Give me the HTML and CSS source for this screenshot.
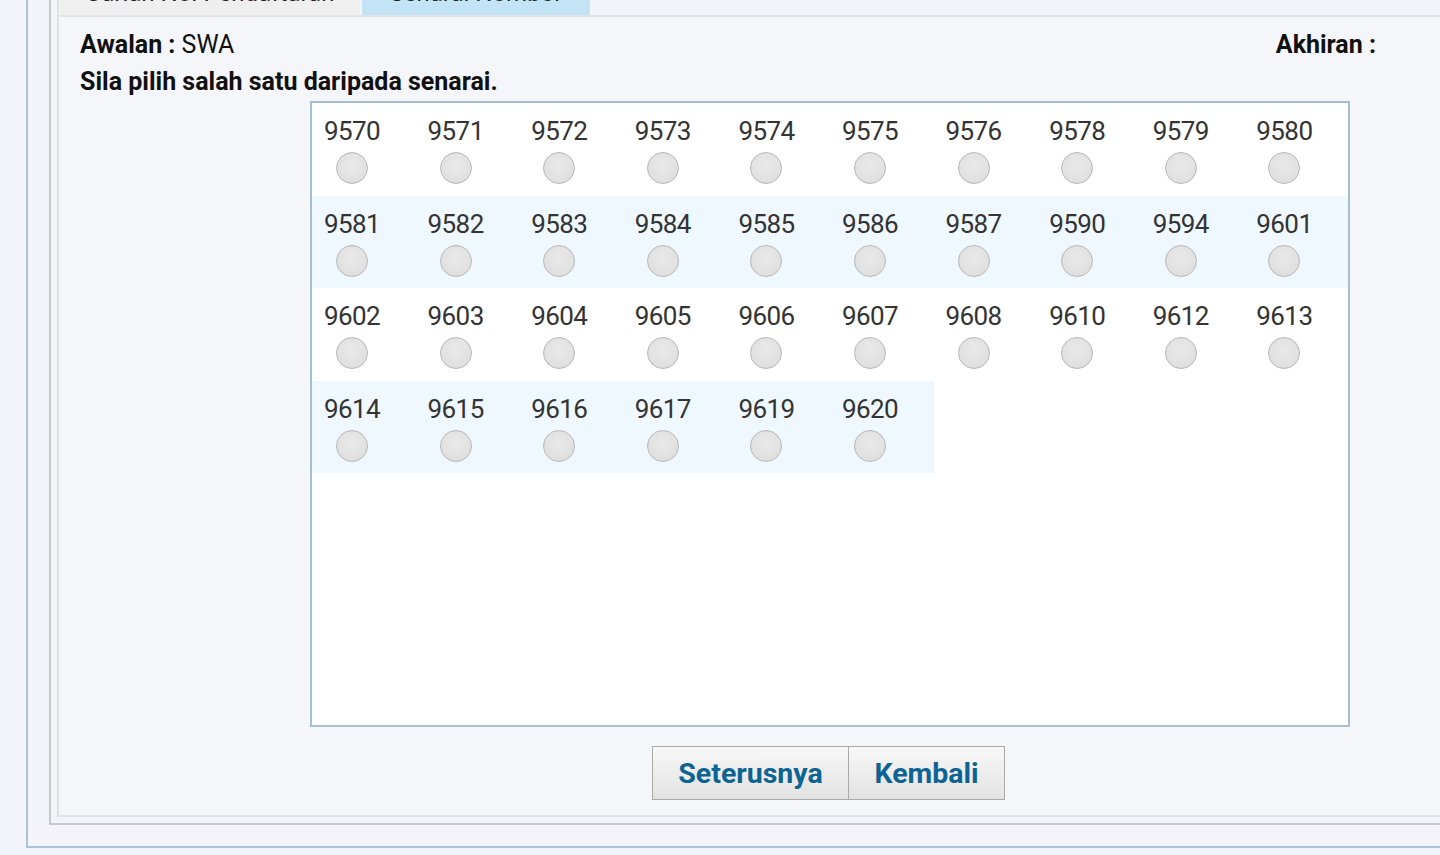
FILE: index.html
```html
<!DOCTYPE html>
<html lang="ms">
<head>
<meta charset="utf-8">
<title>Senarai Nombor</title>
<link rel="stylesheet" href="styles.css">
</head>
<body>
<div class="outer">
  <div class="fieldset">
    <div class="panel">
      <div class="tabs">
        <div class="tab">Carian No. Pendaftaran</div>
        <div class="tab tab-active">Senarai Nombor</div>
      </div>
      <div class="content">
        <div class="info-row">
          <div><b>Awalan :</b> SWA</div>
          <div><b>Akhiran :</b></div>
        </div>
        <div class="instruction">Sila pilih salah satu daripada senarai.</div>
        <div class="list-col">
          <div class="listbox">
            <table class="numbers">
              <tr>
                <td><label class="opt"><span class="num">9570</span><input type="radio" name="no" class="radio"></label></td>
                <td><label class="opt"><span class="num">9571</span><input type="radio" name="no" class="radio"></label></td>
                <td><label class="opt"><span class="num">9572</span><input type="radio" name="no" class="radio"></label></td>
                <td><label class="opt"><span class="num">9573</span><input type="radio" name="no" class="radio"></label></td>
                <td><label class="opt"><span class="num">9574</span><input type="radio" name="no" class="radio"></label></td>
                <td><label class="opt"><span class="num">9575</span><input type="radio" name="no" class="radio"></label></td>
                <td><label class="opt"><span class="num">9576</span><input type="radio" name="no" class="radio"></label></td>
                <td><label class="opt"><span class="num">9578</span><input type="radio" name="no" class="radio"></label></td>
                <td><label class="opt"><span class="num">9579</span><input type="radio" name="no" class="radio"></label></td>
                <td><label class="opt"><span class="num">9580</span><input type="radio" name="no" class="radio"></label></td>
              </tr>
              <tr class="alt">
                <td><label class="opt"><span class="num">9581</span><input type="radio" name="no" class="radio"></label></td>
                <td><label class="opt"><span class="num">9582</span><input type="radio" name="no" class="radio"></label></td>
                <td><label class="opt"><span class="num">9583</span><input type="radio" name="no" class="radio"></label></td>
                <td><label class="opt"><span class="num">9584</span><input type="radio" name="no" class="radio"></label></td>
                <td><label class="opt"><span class="num">9585</span><input type="radio" name="no" class="radio"></label></td>
                <td><label class="opt"><span class="num">9586</span><input type="radio" name="no" class="radio"></label></td>
                <td><label class="opt"><span class="num">9587</span><input type="radio" name="no" class="radio"></label></td>
                <td><label class="opt"><span class="num">9590</span><input type="radio" name="no" class="radio"></label></td>
                <td><label class="opt"><span class="num">9594</span><input type="radio" name="no" class="radio"></label></td>
                <td><label class="opt"><span class="num">9601</span><input type="radio" name="no" class="radio"></label></td>
              </tr>
              <tr>
                <td><label class="opt"><span class="num">9602</span><input type="radio" name="no" class="radio"></label></td>
                <td><label class="opt"><span class="num">9603</span><input type="radio" name="no" class="radio"></label></td>
                <td><label class="opt"><span class="num">9604</span><input type="radio" name="no" class="radio"></label></td>
                <td><label class="opt"><span class="num">9605</span><input type="radio" name="no" class="radio"></label></td>
                <td><label class="opt"><span class="num">9606</span><input type="radio" name="no" class="radio"></label></td>
                <td><label class="opt"><span class="num">9607</span><input type="radio" name="no" class="radio"></label></td>
                <td><label class="opt"><span class="num">9608</span><input type="radio" name="no" class="radio"></label></td>
                <td><label class="opt"><span class="num">9610</span><input type="radio" name="no" class="radio"></label></td>
                <td><label class="opt"><span class="num">9612</span><input type="radio" name="no" class="radio"></label></td>
                <td><label class="opt"><span class="num">9613</span><input type="radio" name="no" class="radio"></label></td>
              </tr>
              <tr class="alt">
                <td><label class="opt"><span class="num">9614</span><input type="radio" name="no" class="radio"></label></td>
                <td><label class="opt"><span class="num">9615</span><input type="radio" name="no" class="radio"></label></td>
                <td><label class="opt"><span class="num">9616</span><input type="radio" name="no" class="radio"></label></td>
                <td><label class="opt"><span class="num">9617</span><input type="radio" name="no" class="radio"></label></td>
                <td><label class="opt"><span class="num">9619</span><input type="radio" name="no" class="radio"></label></td>
                <td><label class="opt"><span class="num">9620</span><input type="radio" name="no" class="radio"></label></td>
                <td class="empty"></td>
                <td class="empty"></td>
                <td class="empty"></td>
                <td class="empty"></td>
              </tr>
            </table>
          </div>
          <div class="buttons">
            <button type="button" class="btn btn-next">Seterusnya</button>
            <button type="button" class="btn btn-back">Kembali</button>
          </div>
        </div>
      </div>
    </div>
  </div>
</div>
</body>
</html>
```

FILE: styles.css
```css
html, body {
  margin: 0;
  padding: 0;
  overflow: hidden;
}

body {
  background: #f2f4f9;
  font-family: Roboto, "Liberation Sans", sans-serif;
  color: #111;
  width: 1440px;
  height: 855px;
}

.outer {
  margin-left: 26px;
  margin-top: -40px;
  width: 1500px;
  border-left: 2px solid #a9c2d9;
  border-bottom: 2px solid #a9c2d9;
  padding: 0 0 21px 21px;
}

.fieldset {
  border-left: 2px solid #c9c9c9;
  border-bottom: 2px solid #c9c9c9;
  padding: 0 0 6px 6px;
}

.panel {
  border-left: 2px solid #e1e1e1;
  border-bottom: 2px solid #e1e1e1;
  background: #f5f6fa;
}

.tabs {
  display: flex;
  gap: 2px;
  padding-left: 1px;
  height: 55px;
  border-bottom: 2px solid #e3e3e5;
  background: #f2f4f9;
}

.tab {
  width: 300px;
  display: flex;
  align-items: flex-end;
  justify-content: center;
  padding-bottom: 8px;
  box-sizing: border-box;
  background: #efefef;
  font-size: 24px;
  line-height: 28px;
  color: #222;
}

.tab-active {
  width: 228px;
  background: linear-gradient(#d4eefb, #bfe2f4);
}

.content {
  padding: 13px 0 15px 21px;
}

.info-row {
  display: flex;
  justify-content: space-between;
  width: 1296px;
  font-size: 25px;
  line-height: 30px;
}

.info-row b {
  font-weight: 700;
}

.instruction {
  font-size: 25px;
  font-weight: 700;
  line-height: 30px;
  margin-top: 7px;
}

.list-col {
  width: 1040px;
  margin-left: 230px;
  margin-top: 4px;
}

.listbox {
  height: 622px;
  background: #fff;
  border: 2px solid #a3bfd3;
  box-sizing: content-box;
}

.numbers {
  width: 100%;
  border-collapse: collapse;
  table-layout: fixed;
}

.numbers td {
  height: 92.5px;
  padding: 0 0 0 12px;
  vertical-align: top;
  box-sizing: border-box;
}

.numbers tr.alt td {
  background: #f0f8ff;
}

.numbers tr.alt td.empty {
  background: transparent;
}

.opt {
  display: inline-flex;
  flex-direction: column;
  align-items: center;
  padding-top: 13px;
}

.num {
  font-size: 26px;
  line-height: 30px;
  color: #333;
  letter-spacing: -0.6px;
}

.radio {
  appearance: none;
  -webkit-appearance: none;
  margin: 6px 0 0 0;
  width: 32px;
  height: 32px;
  border-radius: 50%;
  border: 1px solid #b9b9b9;
  background: radial-gradient(circle at 50% 40%, #e9e9e9, #dcdcdc);
  box-sizing: border-box;
}

.buttons {
  display: flex;
  justify-content: center;
  margin-top: 19px;
  padding-right: 3px;
}

.btn {
  height: 54px;
  font-family: Roboto, "Liberation Sans", sans-serif;
  font-size: 28.5px;
  font-weight: 700;
  color: #0d6494;
  background: linear-gradient(#f8f8f8, #e2e2e2);
  border: 1px solid #a9a9a9;
  margin: 0;
}

.btn-next {
  width: 197px;
}

.btn-back {
  width: 156px;
  border-left: none;
}
```
